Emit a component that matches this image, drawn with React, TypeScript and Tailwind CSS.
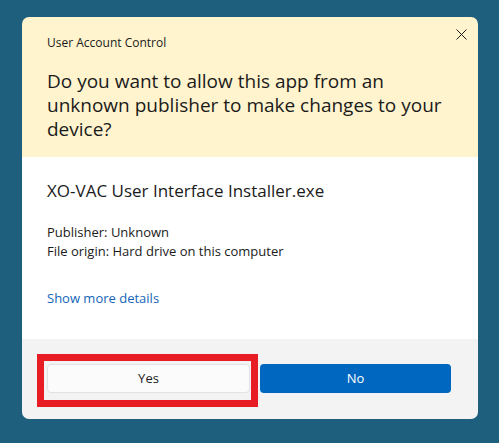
export default function App() {
  return (
    <div className="w-[499px] h-[443px] bg-[#1e5f7e] pt-[17px] pl-[22px] font-['Open_Sans',sans-serif] text-[#1b1b1b]">
      <div className="relative w-[456px] h-[402px] rounded-[7px] overflow-hidden flex flex-col">
        {/* header */}
        <div className="h-[140px] bg-[#fff4ce] px-[25px] pt-[18px]">
          <p className="text-[12px] leading-[16px]">User Account Control</p>
          <h1 className="mt-[18px] text-[19px] leading-[24px] whitespace-nowrap">
            Do you want to allow this app from an<br />
            unknown publisher to make changes to your<br />
            device?
          </h1>
        </div>
        <button className="absolute left-[432px] top-[10px] w-[14px] h-[14px] flex items-center justify-center">
          <svg width="11" height="11" viewBox="0 0 11 11" fill="none" stroke="#1b1b1b" strokeWidth="1">
            <path d="M0.5 0.5 L10.5 10.5 M10.5 0.5 L0.5 10.5" />
          </svg>
        </button>

        {/* body */}
        <div className="flex-1 bg-white px-[25px] pt-[23px]">
          <p className="text-[17px] leading-[22px]">XO-VAC User Interface Installer.exe</p>
          <div className="mt-[21px] text-[13px] leading-[19px]">
            <p>Publisher: Unknown</p>
            <p>File origin: Hard drive on this computer</p>
          </div>
          <p className="mt-[28px] text-[13px] leading-[19px] text-[#1565b7]">Show more details</p>
        </div>

        {/* footer */}
        <div className="relative h-[80px] bg-[#f3f3f3] pl-[25px] pt-[25px] flex gap-[10px]">
          <button className="w-[203px] h-[29px] rounded-[4px] bg-[#fbfbfb] border border-[#e2e2e2] text-[13px]">
            Yes
          </button>
          <button className="w-[191px] h-[29px] rounded-[4px] bg-[#0067c0] text-white text-[13px]">
            No
          </button>
          <div className="absolute left-[15px] top-[15px] w-[221px] h-[53px] border-[7px] border-[#e81c24]" />
        </div>
      </div>
    </div>
  );
}
